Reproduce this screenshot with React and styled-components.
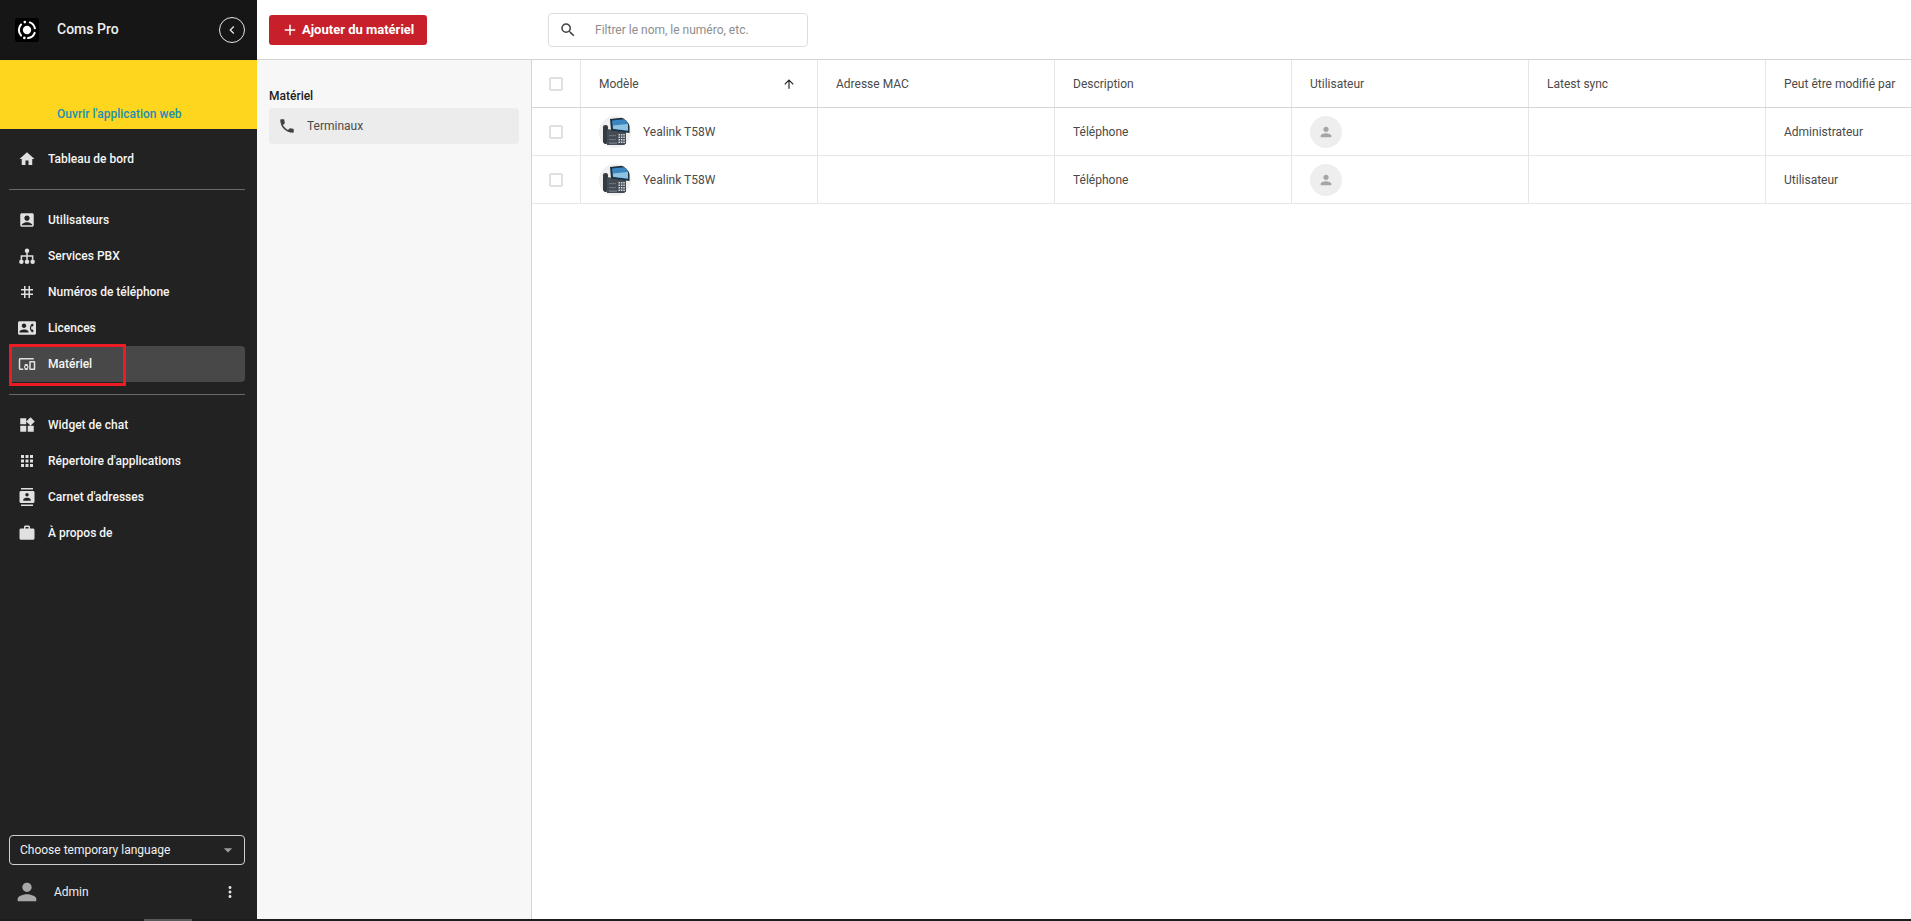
import React from 'react';
import styled, { createGlobalStyle } from 'styled-components';
import {
  MdAccountBox,
  MdAdd,
  MdApps,
  MdArrowDropDown,
  MdArrowUpward,
  MdChevronLeft,
  MdContactPhone,
  MdContacts,
  MdHome,
  MdMoreVert,
  MdOutlineDevicesOther,
  MdPerson,
  MdPhone,
  MdSearch,
  MdTag,
  MdWidgets,
  MdWork,
} from 'react-icons/md';

const GlobalStyle = createGlobalStyle`
  html, body {
    margin: 0;
    padding: 0;
    height: 100%;
    overflow: hidden;
  }
  body {
    font-family: Roboto, "Liberation Sans", sans-serif;
    font-size: 12px;
    color: #4a4a4a;
    background: #fff;
  }
  * { box-sizing: border-box; }
`;

const Page = styled.div`
  position: relative;
  display: flex;
  flex-direction: column;
  width: 1911px;
  height: 921px;
  overflow: hidden;
`;

const Main = styled.div`
  display: flex;
  flex: 1;
  min-height: 0;
`;

const BottomStrip = styled.div`
  flex: none;
  height: 2px;
  background: #1c1c1c;
`;

const StripThumb = styled.div`
  width: 48px;
  height: 2px;
  margin-left: 144px;
  background: #5a5a5a;
`;

const Sidebar = styled.aside`
  display: flex;
  flex-direction: column;
  flex: 0 0 257px;
  background: #222;
  color: #f5f5f5;
`;

const Brand = styled.div`
  display: flex;
  align-items: center;
  height: 60px;
  padding: 0 12px 0 15px;
  background: #161616;
`;

const LogoBox = styled.div`
  display: flex;
  align-items: center;
  justify-content: center;
  width: 24px;
  height: 24px;
  border-radius: 3px;
  background: #000;
`;

const BrandName = styled.span`
  margin: -2px 0 0 18px;
  flex: 1;
  font-size: 14px;
  font-weight: 500;
  color: #eee;
`;

const CollapseButton = styled.div`
  display: flex;
  align-items: center;
  justify-content: center;
  width: 26px;
  height: 26px;
  border: 1px solid #e6e6e6;
  border-radius: 50%;
  font-size: 16px;
  color: #e6e6e6;
`;

const Banner = styled.div`
  display: flex;
  align-items: flex-end;
  height: 69px;
  padding: 0 0 8px 57px;
  background: #ffd61e;
  font-weight: 500;
  font-size: 12px;
  color: #1d8fb5;
`;

const NavGroup = styled.nav`
  display: flex;
  flex-direction: column;
  padding: ${({ $last }) => ($last ? '12px 12px 0 9px' : '12px 12px 12px 9px')};
`;

const Divider = styled.hr`
  flex: none;
  width: 236px;
  height: 1px;
  margin: 0 0 0 9px;
  border: 0;
  background: #6a6a6a;
`;

const NavItem = styled.div`
  display: flex;
  align-items: center;
  width: 236px;
  height: 36px;
  padding-left: 9px;
  border-radius: 4px;
  background: ${({ $active }) => ($active ? '#484848' : 'transparent')};
  font-weight: 500;
  font-size: 12px;
  color: #f5f5f5;

  svg {
    flex: none;
    width: 18px;
    height: 18px;
    margin-right: 12px;
    color: #e0e0e0;
  }
`;

const Spacer = styled.div`
  flex: 1;
`;

const LanguageSelect = styled.div`
  display: flex;
  align-items: center;
  justify-content: space-between;
  width: 236px;
  height: 30px;
  margin-left: 9px;
  padding: 0 6px 0 10px;
  border: 1px solid #d0d0d0;
  border-radius: 4px;
  font-size: 12px;
  color: #f0f0f0;

  svg {
    font-size: 20px;
    color: #9e9e9e;
  }
`;

const UserRow = styled.div`
  display: flex;
  align-items: center;
  height: 54px;
  padding: 0 18px 0 13px;
  font-size: 12px;
  color: #eee;
`;

const UserName = styled.span`
  flex: 1;
  margin-left: 13px;
`;

const Content = styled.div`
  display: flex;
  flex-direction: column;
  flex: 1;
  min-width: 0;
`;

const Toolbar = styled.header`
  display: flex;
  flex: none;
  align-items: center;
  height: 60px;
  padding: 0 0 0 12px;
  border-bottom: 1px solid #d4d4d4;
  background: #fff;
`;

const AddButton = styled.div`
  display: flex;
  align-items: center;
  width: 158px;
  height: 30px;
  padding-left: 12px;
  border-radius: 3px;
  background: #c8202b;
  font-weight: 700;
  font-size: 13px;
  color: #fff;

  svg {
    font-size: 18px;
    margin-right: 3px;
  }
`;

const SearchBox = styled.div`
  display: flex;
  align-items: center;
  width: 260px;
  height: 34px;
  margin-left: 121px;
  padding-left: 10px;
  border: 1px solid #dedede;
  border-radius: 4px;
  font-size: 12px;
  color: #8d8d8d;

  svg {
    font-size: 18px;
    margin-right: 18px;
    color: #424242;
  }
`;

const Body = styled.div`
  display: flex;
  flex: 1;
  min-height: 0;
`;

const SubNav = styled.div`
  flex: 0 0 275px;
  padding: 28px 12px 0;
  border-right: 1px solid #d4d4d4;
  background: #f7f7f7;
`;

const SubNavTitle = styled.div`
  height: 20px;
  font-weight: 500;
  font-size: 12px;
  line-height: 16px;
  color: #212121;
`;

const SubNavItem = styled.div`
  display: flex;
  align-items: center;
  height: 36px;
  padding-left: 9px;
  border-radius: 4px;
  background: #ececec;
  color: #4a4a4a;

  svg {
    font-size: 18px;
    margin-right: 11px;
    color: #424242;
  }
`;

const TableArea = styled.div`
  flex: 1;
  min-width: 0;
  overflow: hidden;
`;

const Row = styled.div`
  display: grid;
  grid-template-columns: 48px repeat(6, 237px);
  height: 48px;
  width: 1470px;
  border-bottom: 1px solid ${({ $head }) => ($head ? '#d6d6d6' : '#e6e6e6')};
`;

const Cell = styled.div`
  display: flex;
  align-items: center;
  padding: 0 18px;
  border-left: 1px solid #e6e6e6;
  font-size: 12px;
  color: #4a4a4a;
`;

const CheckCell = styled.div`
  display: flex;
  align-items: center;
  justify-content: center;
`;

const Checkbox = styled.span`
  width: 14px;
  height: 14px;
  border: 2px solid #e0e0e0;
  border-radius: 2px;
`;

const SortArrow = styled(MdArrowUpward)`
  margin-left: auto;
  margin-right: 3px;
  font-size: 14px;
  color: #212121;
`;

const DeviceAvatar = styled.div`
  flex: none;
  width: 32px;
  height: 32px;
  margin-right: 12px;
  border-radius: 50%;
  background: #f0f0f0;
  overflow: hidden;
`;

const UserAvatar = styled.div`
  display: flex;
  align-items: center;
  justify-content: center;
  width: 32px;
  height: 32px;
  border-radius: 50%;
  background: #eee;
  font-size: 16px;
  color: #a6a6a6;
`;

const Annotation = styled.div`
  position: absolute;
  left: 9px;
  top: 344px;
  width: 117px;
  height: 42px;
  border: 3px solid #ed1c24;
  pointer-events: none;
`;

function ComsLogo() {
  return (
    <svg width="22" height="22" viewBox="0 0 20 20" fill="none">
      <circle cx="10" cy="10" r="3.8" fill="#fff" />
      <path
        d="M12.5 3.1a7.4 7.4 0 0 1 4.7 5.4M17 12.6a7.4 7.4 0 0 1-6 4.7M4.6 15a7.4 7.4 0 0 1-2-5.4 7.4 7.4 0 0 1 2-4.6"
        stroke="#fff"
        strokeWidth="1.8"
        strokeLinecap="round"
      />
      <circle cx="8" cy="2.8" r="1.2" fill="#fff" />
      <circle cx="7.6" cy="17.2" r="1.2" fill="#fff" />
    </svg>
  );
}

// the PBX icon: one node on top, three below
function TreeIcon() {
  return (
    <svg viewBox="0 0 24 24" fill="currentColor">
      <circle cx="12" cy="5" r="3" />
      <circle cx="4.5" cy="19.5" r="3" />
      <circle cx="12" cy="19.5" r="3" />
      <circle cx="19.5" cy="19.5" r="3" />
      <path d="M11 7h2v4h7.5v6h-2v-4H13v4h-2v-4H5.500v4h-2v-6H11z" />
    </svg>
  );
}

function PhonePicture() {
  return (
    <svg width="32" height="32" viewBox="0 0 32 32">
      <rect x="4" y="9" width="5" height="19" rx="2.2" fill="#343a42" />
      <path d="M8 13 L27 16 L27 28 Q27 29 26 29 L8 29 Z" fill="#454c55" />
      <path d="M11 3 L25 1.500 Q30 3 30.500 9 L30.500 17 L12 14.500 Z" fill="#20303f" />
      <path d="M13 4.500 L25 3.200 Q28.800 4.500 29 9 L29 15 L14 13 Z" fill="#3a86bf" />
      <path d="M14 9.500 L29 8 L29 14.500 L14 12.800 Z" fill="#8ec3e2" />
      <g fill="#d9dde1">
        {[0, 1, 2, 3].map((r) =>
          [0, 1, 2].map((c) => (
            <rect key={`${r}-${c}`} x={19.500 + c * 2.4} y={18 + r * 2.5} width="1.500" height="1.500" />
          ))
        )}
      </g>
      <rect x="10" y="19" width="7" height="1.200" fill="#6b7179" />
      <rect x="10" y="23" width="7" height="1.200" fill="#6b7179" />
      <rect x="10" y="26.500" width="8" height="1.200" fill="#7c8289" />
    </svg>
  );
}

const mainNav = [
  { label: 'Utilisateurs', Icon: MdAccountBox },
  { label: 'Services PBX', Icon: TreeIcon },
  { label: 'Numéros de téléphone', Icon: MdTag },
  { label: 'Licences', Icon: MdContactPhone },
  { label: 'Matériel', Icon: MdOutlineDevicesOther, active: true },
];

const otherNav = [
  { label: 'Widget de chat', Icon: MdWidgets },
  { label: "Répertoire d'applications", Icon: MdApps },
  { label: "Carnet d'adresses", Icon: MdContacts },
  { label: 'À propos de', Icon: MdWork },
];

const columns = ['Adresse MAC', 'Description', 'Utilisateur', 'Latest sync', 'Peut être modifié par'];

const devices = [
  { model: 'Yealink T58W', type: 'Téléphone', editor: 'Administrateur' },
  { model: 'Yealink T58W', type: 'Téléphone', editor: 'Utilisateur' },
];

export default function App() {
  return (
    <Page>
      <GlobalStyle />
      <Main>
        <Sidebar>
          <Brand>
            <LogoBox>
              <ComsLogo />
            </LogoBox>
            <BrandName>Coms Pro</BrandName>
            <CollapseButton>
              <MdChevronLeft />
            </CollapseButton>
          </Brand>
          <Banner>Ouvrir l'application web</Banner>
          <NavGroup>
            <NavItem>
              <MdHome />
              Tableau de bord
            </NavItem>
          </NavGroup>
          <Divider />
          <NavGroup>
            {mainNav.map(({ label, Icon, active }) => (
              <NavItem key={label} $active={active}>
                <Icon />
                {label}
              </NavItem>
            ))}
          </NavGroup>
          <Divider />
          <NavGroup $last>
            {otherNav.map(({ label, Icon }) => (
              <NavItem key={label}>
                <Icon />
                {label}
              </NavItem>
            ))}
          </NavGroup>
          <Spacer />
          <LanguageSelect>
            Choose temporary language
            <MdArrowDropDown />
          </LanguageSelect>
          <UserRow>
            <MdPerson size={28} color="#a8a8a8" />
            <UserName>Admin</UserName>
            <MdMoreVert size={18} color="#e0e0e0" />
          </UserRow>
        </Sidebar>
        <Content>
          <Toolbar>
            <AddButton>
              <MdAdd />
              Ajouter du matériel
            </AddButton>
            <SearchBox>
              <MdSearch />
              Filtrer le nom, le numéro, etc.
            </SearchBox>
          </Toolbar>
          <Body>
            <SubNav>
              <SubNavTitle>Matériel</SubNavTitle>
              <SubNavItem>
                <MdPhone />
                Terminaux
              </SubNavItem>
            </SubNav>
            <TableArea>
              <Row $head>
                <CheckCell>
                  <Checkbox />
                </CheckCell>
                <Cell>
                  Modèle
                  <SortArrow />
                </Cell>
                {columns.map((c) => (
                  <Cell key={c}>{c}</Cell>
                ))}
              </Row>
              {devices.map((d) => (
                <Row key={d.editor}>
                  <CheckCell>
                    <Checkbox />
                  </CheckCell>
                  <Cell>
                    <DeviceAvatar>
                      <PhonePicture />
                    </DeviceAvatar>
                    {d.model}
                  </Cell>
                  <Cell />
                  <Cell>{d.type}</Cell>
                  <Cell>
                    <UserAvatar>
                      <MdPerson />
                    </UserAvatar>
                  </Cell>
                  <Cell />
                  <Cell>{d.editor}</Cell>
                </Row>
              ))}
            </TableArea>
          </Body>
        </Content>
      </Main>
      <BottomStrip>
        <StripThumb />
      </BottomStrip>
      <Annotation />
    </Page>
  );
}
